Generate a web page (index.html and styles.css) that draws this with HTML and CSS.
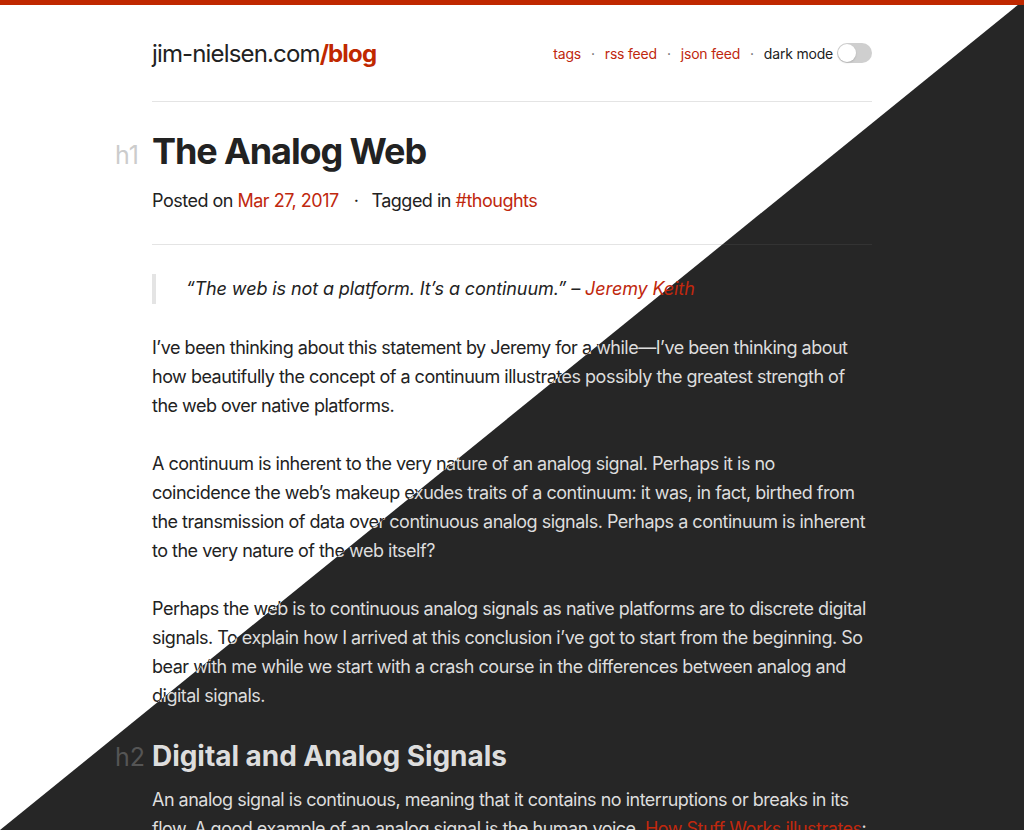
FILE: index.html
```html
<!DOCTYPE html>
<html lang="en">
<head>
<meta charset="utf-8">
<title>The Analog Web – jim-nielsen.com/blog</title>
<link rel="stylesheet" href="styles.css">
</head>
<body>
<div class="page page--light">
  <div class="topbar"></div>
  <div class="wrap">
    <header class="header">
      <a class="logo" href="#">jim-nielsen.com<b>/blog</b></a>
      <nav class="nav">
        <a href="#">tags</a><span class="dot">·</span>
        <a href="#">rss feed</a><span class="dot">·</span>
        <a href="#">json feed</a><span class="dot">·</span>
        <span class="mode">dark mode</span>
        <span class="toggle"><span class="knob"></span></span>
      </nav>
    </header>
    <article class="post">
      <h1 class="h h--1">The Analog Web</h1>
      <div class="meta">Posted on <a href="#">Mar 27, 2017</a><span class="sep">·</span>Tagged in <a href="#">#thoughts</a></div>
      <blockquote class="quote">“The web is not a platform. It’s a continuum.” – <a href="#">Jeremy Keith</a></blockquote>
      <p>I’ve been thinking about this statement by Jeremy for a while—I’ve been thinking about how beautifully the concept of a continuum illustrates possibly the greatest strength of the web over native platforms.</p>
      <p>A continuum is inherent to the very nature of an analog signal. Perhaps it is no coincidence the web’s makeup exudes traits of a continuum: it was, in fact, birthed from the transmission of data over continuous analog signals. Perhaps a continuum is inherent to the very nature of the web itself?</p>
      <p>Perhaps the web is to continuous analog signals as native platforms are to discrete digital signals. To explain how I arrived at this conclusion i’ve got to start from the beginning. So bear with me while we start with a crash course in the differences between analog and digital signals.</p>
      <h2 class="h h--2">Digital and Analog Signals</h2>
      <p>An analog signal is continuous, meaning that it contains no interruptions or breaks in its flow. A good example of an analog signal is the human voice. <a href="#">How Stuff Works illustrates</a>: when you speak, your voice travels through the air as a continuous wave.</p>
    </article>
  </div>
</div>
<div class="page page--dark" aria-hidden="true">
  <div class="topbar"></div>
  <div class="wrap">
    <header class="header">
      <a class="logo" href="#">jim-nielsen.com<b>/blog</b></a>
      <nav class="nav">
        <a href="#">tags</a><span class="dot">·</span>
        <a href="#">rss feed</a><span class="dot">·</span>
        <a href="#">json feed</a><span class="dot">·</span>
        <span class="mode">dark mode</span>
        <span class="toggle toggle--on"><span class="knob"></span></span>
      </nav>
    </header>
    <article class="post">
      <h1 class="h h--1">The Analog Web</h1>
      <div class="meta">Posted on <a href="#">Mar 27, 2017</a><span class="sep">·</span>Tagged in <a href="#">#thoughts</a></div>
      <blockquote class="quote">“The web is not a platform. It’s a continuum.” – <a href="#">Jeremy Keith</a></blockquote>
      <p>I’ve been thinking about this statement by Jeremy for a while—I’ve been thinking about how beautifully the concept of a continuum illustrates possibly the greatest strength of the web over native platforms.</p>
      <p>A continuum is inherent to the very nature of an analog signal. Perhaps it is no coincidence the web’s makeup exudes traits of a continuum: it was, in fact, birthed from the transmission of data over continuous analog signals. Perhaps a continuum is inherent to the very nature of the web itself?</p>
      <p>Perhaps the web is to continuous analog signals as native platforms are to discrete digital signals. To explain how I arrived at this conclusion i’ve got to start from the beginning. So bear with me while we start with a crash course in the differences between analog and digital signals.</p>
      <h2 class="h h--2">Digital and Analog Signals</h2>
      <p>An analog signal is continuous, meaning that it contains no interruptions or breaks in its flow. A good example of an analog signal is the human voice. <a href="#">How Stuff Works illustrates</a>: when you speak, your voice travels through the air as a continuous wave.</p>
    </article>
  </div>
</div>
</body>
</html>
```
FILE: styles.css
```css
html, body {
  margin: 0;
  height: 100%;
  overflow: hidden;
}
body {
  font-family: Inter, "Noto Sans", "Liberation Sans", sans-serif;
  -webkit-font-smoothing: antialiased;
}
a {
  color: #c0280e;
  text-decoration: none;
}
.page {
  min-height: 100vh;
  background: #fff;
  color: #222;
}
.page--dark {
  position: fixed;
  inset: 0;
  overflow: hidden;
  background: #262626;
  color: #ddd;
  clip-path: polygon(100% 0, 100% 100%, 0 100%);
}
.topbar {
  height: 5px;
  background: #c02800;
}
.wrap {
  width: 720px;
  margin: 0 auto;
}
.header {
  height: 96px;
  display: flex;
  align-items: center;
  justify-content: space-between;
  border-bottom: 1px solid #e4e4e4;
}
.logo {
  font-size: 24px;
  color: inherit;
  letter-spacing: -0.85px;
}
.logo b {
  color: #c02800;
  font-weight: 700;
}
.nav {
  display: flex;
  align-items: center;
  font-size: 14px;
  letter-spacing: -0.2px;
}
.dot {
  margin: 0 10px;
  color: #666;
}
.mode {
  margin-right: 4px;
}
.toggle {
  width: 35px;
  height: 20px;
  border-radius: 10px;
  background: #cfcfcf;
  display: flex;
  align-items: center;
  padding: 0 1px;
  box-sizing: border-box;
}
.knob {
  width: 18px;
  height: 18px;
  border-radius: 50%;
  background: #fff;
  box-shadow: 0 1px 2px rgba(0,0,0,.15);
}
.post {
  font-size: 18px;
  line-height: 29px;
  letter-spacing: -0.5px;
}
.h {
  font-weight: 700;
  line-height: 1.2;
}
.h::before {
  display: inline-block;
  width: 37px;
  margin-left: -37px;
  font-size: 25px;
  font-weight: 400;
  letter-spacing: 0;
  color: #ccc;
}
.h--1 {
  font-size: 36px;
  letter-spacing: -1.1px;
  margin: 28px 0 13px;
}
.h--1::before { content: "h1"; }
.h--2 {
  font-size: 28px;
  letter-spacing: -0.05px;
  margin: 30px 0 11px;
}
.h--2::before { content: "h2"; }
.meta {
  padding-bottom: 29px;
  border-bottom: 1px solid #e4e4e4;
  margin-bottom: 29px;
}
.sep {
  margin: 0 13px 0 15px;
}
.quote {
  margin: 0 0 29px;
  border-left: 4px solid #e4e4e4;
  padding-left: 30px;
  line-height: 30px;
  font-style: italic;
  letter-spacing: -0.1px;
}
.post p {
  margin: 0 0 29px;
}
.page--dark .header,
.page--dark .meta {
  border-bottom-color: #333;
}
.page--dark .quote {
  border-left-color: #444;
}
.page--dark .h::before {
  color: #555;
}
.page--dark .dot {
  color: #999;
}
.page--dark .toggle {
  background: #c02800;
  justify-content: flex-end;
}
```
